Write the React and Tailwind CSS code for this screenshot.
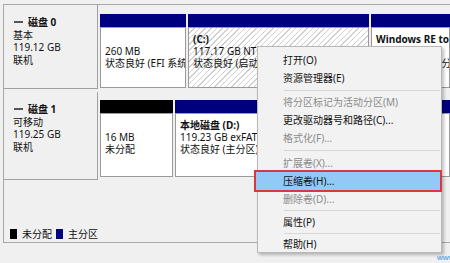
import React from "react";

const hatch =
  "bg-[repeating-linear-gradient(-45deg,#cfcfcf_0px,#cfcfcf_1px,#ffffff_1px,#ffffff_4px)]";

function DiskLabel({ name, lines }) {
  return (
    <div className="w-[94px] shrink-0 border-r border-b border-[#a0a0a0] pl-[9px] pt-[11px] text-[10px] leading-[12.5px] text-[#111]">
      <div className="flex items-center">
        <span className="inline-block w-[9px] h-[2px] bg-[#555] mr-[5px] ml-[1px]" />
        <span className="font-bold">{name}</span>
      </div>
      {lines.map((l, i) => (
        <div key={i}>{l}</div>
      ))}
    </div>
  );
}

function Partition({ w, bar, lines, hatched, grow }) {
  return (
    <div
      className={`flex flex-col ${grow ? "flex-1" : "shrink-0"} min-w-0`}
      style={grow ? undefined : { width: w }}
    >
      <div className={`h-[13px] ${bar}`} />
      <div
        className={`flex-1 border border-[#9a9a9a] ${
          hatched ? hatch : "bg-white"
        } pl-[4px] pt-[5px] text-[10px] leading-[12px] text-[#111] overflow-hidden whitespace-nowrap`}
      >
        {lines.map((l, i) => (
          <div key={i} className={i === 0 ? "font-bold h-[12px]" : ""}>
            {l}
          </div>
        ))}
      </div>
    </div>
  );
}

const items = [
  { t: "打开(O)" },
  { t: "资源管理器(E)" },
  { sep: 6 },
  { t: "将分区标记为活动分区(M)", d: true },
  { t: "更改驱动器号和路径(C)..." },
  { t: "格式化(F)...", d: true },
  { sep: 7 },
  { t: "扩展卷(X)...", d: true },
  { t: "压缩卷(H)...", hl: true },
  { t: "删除卷(D)...", d: true },
  { sep: 5 },
  { t: "属性(P)" },
  { sep: 4 },
  { t: "帮助(H)" },
];

export default function App() {
  return (
    <div className="w-[450px] h-[263px] bg-[#f0f0f0] relative overflow-hidden font-['Noto_Sans','Noto_Sans_CJK_SC',sans-serif]">
      <div className="ml-[3px] mt-[4px] h-[239px] border-l border-t border-b border-[#a9a9a9] flex flex-col">
        {/* Disk 0 */}
        <div className="flex h-[84px]">
          <DiskLabel name="磁盘 0" lines={["基本", "119.12 GB", "联机"]} />
          <div className="flex-1 flex gap-[2px] pl-[2px] pt-[9px] pb-[1px] min-w-0">
            <Partition
              w={86}
              bar="bg-[#00007f]"
              lines={["", "260 MB", "状态良好 (EFI 系统分区)"]}
            />
            <Partition
              w={181}
              bar="bg-[#00007f]"
              hatched
              lines={["(C:)", "117.17 GB NTFS (BitLocker 已加密)", "状态良好 (启动, 页面文件, 故障转储, 主分区)"]}
            />
            <Partition
              grow
              bar="bg-[#00007f]"
              lines={["Windows RE tools", "990 MB NTFS", "状态良好 (恢复分区)"]}
            />
          </div>
        </div>
        <div className="h-[3px]" />
        {/* Disk 1 */}
        <div className="flex h-[88px]">
          <DiskLabel name="磁盘 1" lines={["可移动", "119.25 GB", "联机"]} />
          <div className="flex-1 flex gap-[2px] pl-[2px] pt-[8px] pb-[3px] min-w-0">
            <Partition w={73} bar="bg-black" lines={["", "16 MB", "未分配"]} />
            <Partition
              grow
              bar="bg-[#00007f]"
              lines={["本地磁盘  (D:)", "119.23 GB exFAT", "状态良好 (主分区)"]}
            />
          </div>
        </div>
        <div className="flex-1" />
        {/* Legend */}
        <div className="flex items-center pl-[6px] pb-[2px] text-[10px] leading-[12px] text-[#111]">
          <span className="inline-block w-[7px] h-[10px] bg-black mr-[5px]" />
          <span className="mr-[4px]">未分配</span>
          <span className="inline-block w-[7px] h-[10px] bg-[#00007f] mr-[5px]" />
          <span>主分区</span>
        </div>
      </div>

      {/* Context menu */}
      <div className="absolute left-[257px] top-[46px] w-[185px] h-[207px] bg-[#f2f2f2] border border-[#b8b8b8] shadow-[2px_2px_3px_rgba(0,0,0,0.25)] pt-[4px] text-[10px] text-[#111]">
        {items.map((it, i) =>
          it.sep ? (
            <div
              key={i}
              className="flex items-center pl-[26px] pr-[1px]"
              style={{ height: it.sep }}
            >
              <div className="h-px w-full bg-[#d7d7d7]" />
            </div>
          ) : (
            <div key={i} className="relative h-[18px] flex items-center">
              {it.hl && (
                <div className="absolute left-[-4px] right-[-1px] top-[-2px] bottom-[-2px] border-2 border-[#d9383f] bg-[#91c9f7]" />
              )}
              <span
                className={`relative pl-[25px] ${it.d ? "text-[#8c8c8c]" : ""}`}
              >
                {it.t}
              </span>
            </div>
          )
        )}
      </div>

      <div className="absolute left-[437px] top-[252px] text-[8px] text-[#3a8ee6] font-['Liberation_Sans',sans-serif]">
        www
      </div>
    </div>
  );
}
